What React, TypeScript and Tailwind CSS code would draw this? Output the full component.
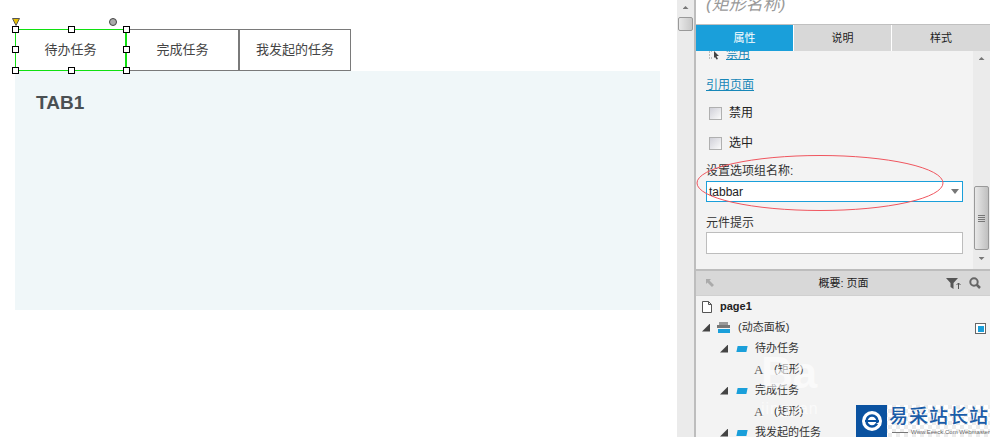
import React from 'react';

const cjk = { fontFamily: '"Liberation Sans", "Noto Sans CJK SC", sans-serif' };

function Handle({ className }: { className: string }) {
  return <span className={`absolute w-[7px] h-[7px] bg-white border border-black ${className}`} />;
}

function Check({ label }: { label: string }) {
  return (
    <div className="flex items-center gap-[7px] h-[20px] ml-[3px]">
      <span className="w-[13px] h-[13px] border border-[#b0b0b0] bg-gradient-to-br from-[#d0d0d8] to-[#fbfbfb]" />
      <span className="text-[12px] text-[#222]">{label}</span>
    </div>
  );
}

function Arrow() {
  return <span className="w-[8px] h-[8px] bg-[#444] [clip-path:polygon(100%_0,100%_100%,0_100%)]" />;
}

function TreeRow({ indent, label, kind }: { indent: number; label: string; kind: 'group' | 'rect' | 'panel' }) {
  return (
    <div className="flex items-center h-[21px]" style={{ paddingLeft: indent }}>
      {kind !== 'rect' && <Arrow />}
      {kind === 'group' && <span className="ml-[9px] w-[10px] h-[6px] bg-[#1a9fda] -skew-x-12" />}
      {kind === 'panel' && (
        <svg width="13" height="11" viewBox="0 0 13 11" className="ml-[7px]">
          <path d="M2 0h9v3H2z" fill="#999" />
          <path d="M0 3h13v3H0z" fill="#777" />
          <path d="M1 7h12v4H1z" fill="#1a9fda" />
        </svg>
      )}
      {kind === 'rect' && <span className="w-[10px] text-[13px] text-[#555] font-['Liberation_Serif']">A</span>}
      <span className={`text-[11px] text-[#333] whitespace-nowrap ${kind === 'rect' ? 'ml-[10px]' : 'ml-[8px]'}`}>{label}</span>
    </div>
  );
}

export default function App() {
  return (
    <div className="relative flex w-[990px] h-[437px] overflow-hidden bg-white" style={cjk}>
      <div className="w-[677px] shrink-0 pt-[29px] pl-[15px]">
        <div className="relative flex h-[42px] w-[336px] text-[13px] text-[#444]">
          <div className="relative flex items-center justify-center w-[112px] border border-[#10e010] border-r-2">
            待办任务
            <Handle className="-left-[4px] -top-[4px]" />
            <Handle className="left-[52px] -top-[4px]" />
            <Handle className="-right-[5px] -top-[4px]" />
            <Handle className="-left-[4px] top-[16px]" />
            <Handle className="-right-[5px] top-[16px]" />
            <Handle className="-left-[4px] -bottom-[4px]" />
            <Handle className="left-[52px] -bottom-[4px]" />
            <Handle className="-right-[5px] -bottom-[4px]" />
            <svg width="8" height="8" viewBox="0 0 8 8" className="absolute -left-[4px] -top-[12px]">
              <path d="M.5.5h7L4 7.5z" fill="#e8c000" stroke="#555" />
            </svg>
            <span className="absolute left-[93px] -top-[12px] w-[8px] h-[8px] rounded-full bg-[#aaa] border border-[#444]" />
          </div>
          <div className="flex items-center justify-center w-[113px] border border-l-0 border-r-2 border-[#7a7a7a]">完成任务</div>
          <div className="flex items-center justify-center w-[111px] border border-l-0 border-[#7a7a7a]">我发起的任务</div>
        </div>
        <div className="w-[645px] h-[239px] bg-[#f0f7f9] pl-[21px] pt-[21px]">
          <span className="text-[19px] font-bold text-[#4a5053] leading-[22px] block">TAB1</span>
        </div>
      </div>

      {/* left scrollbar strip of the inspector */}
      <div className="w-[17px] shrink-0 bg-[#ebebeb] flex flex-col items-center pt-[6px]">
        <span className="w-[6px] h-[3px] bg-[#777] [clip-path:polygon(50%_0,100%_100%,0_100%)]" />
        <span className="mt-[8px] w-[15px] h-[14px] border border-[#999] rounded-[2px] bg-gradient-to-r from-[#e8e8e8] to-[#c8c8c8]" />
      </div>

      <div className="w-[296px] shrink-0 flex flex-col border-l-2 border-[#bdbdbd] bg-[#f3f3f3]">
        <div className="h-[25px] shrink-0 bg-white border-b border-[#c0c0c0] pl-[10px] text-[17px] italic text-[#9a9a9a] leading-[10px] overflow-hidden">
          (矩形名称)
        </div>
        <div className="flex h-[26px] shrink-0 text-[11px]">
          <div className="w-[98px] bg-[#1a9fda] text-white flex items-center justify-center border-r border-white">属性</div>
          <div className="w-[98px] bg-[#d8d8d8] text-[#222] flex items-center justify-center border-r border-white">说明</div>
          <div className="flex-1 bg-[#d8d8d8] text-[#222] flex items-center justify-center">样式</div>
        </div>

        <div className="flex h-[218px] shrink-0 overflow-hidden">
          <div className="flex-1 pl-[10px] flex flex-col">
            <div className="h-[9px] shrink-0 flex items-end overflow-hidden ml-[3px]">
              <svg width="12" height="9" viewBox="0 0 12 9" className="shrink-0">
                <path d="M0 1h1M0 4h1M0 7h1M2 0h1M2 7h1" stroke="#888" />
                <path d="M5 0l5 5H7.500l1.500 3-1.500.500L6 6 5 7z" fill="#444" />
              </svg>
              <span className="ml-[5px] text-[12px] leading-[14px] h-[9px] flex items-end text-[#1787b8] underline">
                <span className="block -mb-[1px]">禁用</span>
              </span>
            </div>
            <div className="mt-[17px] text-[12px] leading-[16px] text-[#1787b8] underline">引用页面</div>
            <div className="mt-[10px] flex flex-col gap-[10px]">
              <Check label="禁用" />
              <Check label="选中" />
            </div>
            <div className="mt-[10px] text-[12px] leading-[16px] text-[#333]">设置选项组名称:</div>
            <div className="mt-[2px] h-[21px] border border-[#1a9fda] bg-white flex items-center justify-between pl-[2px] pr-[3px] text-[12px] text-[#222] w-[257px]">
              tabbar
              <span className="w-[8px] h-[5px] bg-[#777] [clip-path:polygon(0_0,100%_0,50%_100%)]" />
            </div>
            <div className="mt-[13px] text-[12px] leading-[16px] text-[#333]">元件提示</div>
            <div className="mt-[1px] h-[22px] border border-[#bdbdbd] bg-white w-[257px]" />
          </div>
          <div className="w-[17px] bg-[#ebebeb] flex flex-col items-center pt-[6px]">
            <span className="w-[6px] h-[3px] bg-[#777] [clip-path:polygon(50%_0,100%_100%,0_100%)]" />
            <span className="mt-[126px] w-[15px] h-[64px] border border-[#999] rounded-[2px] bg-gradient-to-r from-[#e8e8e8] to-[#c0c0c0] flex flex-col items-center justify-center gap-[1px]">
              <span className="w-[7px] h-[1px] bg-[#777]" />
              <span className="w-[7px] h-[1px] bg-[#777]" />
              <span className="w-[7px] h-[1px] bg-[#777]" />
              <span className="w-[7px] h-[1px] bg-[#777]" />
            </span>
            <span className="mt-[7px] w-[6px] h-[3px] bg-[#777] [clip-path:polygon(0_0,100%_0,50%_100%)]" />
          </div>
        </div>

        <div className="h-[26px] shrink-0 bg-[#d8d8d8] border-t-2 border-[#bdbdbd] flex items-center text-[11px] text-[#222]">
          <svg width="8" height="8" viewBox="0 0 8 8" className="ml-[10px] shrink-0">
            <path d="M0 0h5L3.500 1.500 8 6 6 8 1.500 3.500 0 5z" fill="#aaa" />
          </svg>
          <span className="flex-1 text-center pl-[27px]">概要: 页面</span>
          <svg width="15" height="11" viewBox="0 0 15 11" className="shrink-0">
            <path d="M0 0h12L7.500 5v6l-3-2V5z" fill="#555" />
            <path d="M12.500 11V5M10.500 7l2-2 2 2" stroke="#555" fill="none" />
          </svg>
          <svg width="12" height="12" viewBox="0 0 12 12" className="ml-[8px] mr-[9px] shrink-0">
            <circle cx="5" cy="5" r="3.700" fill="none" stroke="#666" strokeWidth="2" />
            <path d="M7.500 7.500L11 11" stroke="#666" strokeWidth="2.500" />
          </svg>
        </div>

        <div className="relative flex-1 min-h-0 overflow-hidden border-t border-[#d0d0d0]">
          <div className="flex items-center h-[21px] pl-[6px]">
            <svg width="10" height="12" viewBox="0 0 10 12" className="text-[#555]">
              <path d="M.5.5h6l3 3v8h-9zM6.500.5v3h3" fill="#fff" stroke="currentColor" />
            </svg>
            <span className="ml-[8px] text-[11px] font-bold text-[#222]">page1</span>
          </div>
          <TreeRow indent={6} label="(动态面板)" kind="panel" />
          <TreeRow indent={24} label="待办任务" kind="group" />
          <TreeRow indent={58} label="(矩形)" kind="rect" />
          <TreeRow indent={24} label="完成任务" kind="group" />
          <TreeRow indent={58} label="(矩形)" kind="rect" />
          <TreeRow indent={24} label="我发起的任务" kind="group" />
          <span className="absolute right-[4px] top-[27px] w-[11px] h-[11px] border border-[#666] bg-white flex items-center justify-center">
            <span className="w-[6px] h-[6px] bg-[#1a9fda]" />
          </span>
        </div>
      </div>

      {/* faint photo-site watermark over the tree */}
      <div className="absolute left-[761px] top-[350px] flex flex-col text-white/60 pointer-events-none">
        <span className="text-[44px] font-bold leading-[46px]">Ba</span>
        <span className="text-[16px] leading-[18px] mt-[4px] tracking-[1px]">jingyan</span>
      </div>

      {/* site logo */}
      <div className="absolute left-[856px] top-[405px] w-[134px] h-[32px] flex bg-[repeating-conic-gradient(#ececec_0_25%,#ffffff_0_50%)] bg-[length:8px_8px]">
        <span className="w-[31px] shrink-0 bg-[#0a52a0] flex items-center justify-center">
          <svg width="20" height="20" viewBox="0 0 20 20">
            <circle cx="10" cy="10" r="10" fill="#fff" />
            <circle cx="10" cy="10" r="5.500" fill="none" stroke="#0a52a0" strokeWidth="2.500" />
            <path d="M3 10h14" stroke="#0a52a0" strokeWidth="2" />
            <path d="M14 12l5 3v-3z" fill="#fff" />
          </svg>
        </span>
        <div className="flex flex-col pl-[2px]">
          <span className="text-[19px] leading-[24px] text-[#1a5ca8] tracking-[1px] whitespace-nowrap font-medium">易采站长站</span>
          <div className="flex items-center">
            <span className="w-[16px] h-[1px] bg-[#777] ml-[3px] shrink-0" />
            <span className="text-[6px] leading-[7px] text-[#666] whitespace-nowrap pl-[3px]">Www.Eeeck.Com Webmaster</span>
          </div>
        </div>
      </div>

      {/* red hand-drawn ellipse */}
      <svg className="absolute left-[695px] top-[154px] pointer-events-none" width="255" height="60" viewBox="0 0 255 60" fill="none">
        <ellipse cx="125" cy="29" rx="123" ry="27.500" stroke="#f0565f" strokeWidth="1" />
      </svg>
    </div>
  );
}
